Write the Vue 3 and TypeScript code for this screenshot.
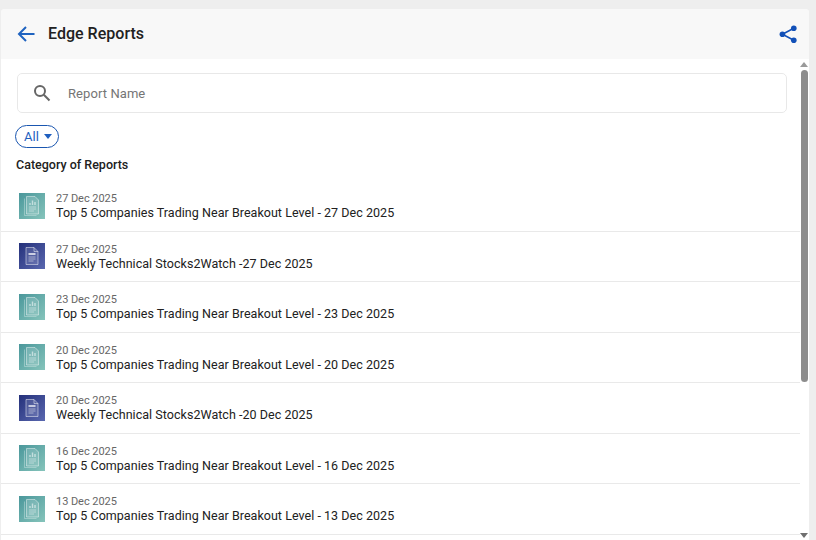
<script setup lang="ts">
interface Report { date: string; title: string; kind: 'teal' | 'navy' }
const top5 = 'Top 5 Companies Trading Near Breakout Level - '
const reports: Report[] = [
  { date: '27 Dec 2025', title: top5 + '27 Dec 2025', kind: 'teal' },
  { date: '27 Dec 2025', title: 'Weekly Technical Stocks2Watch -27 Dec 2025', kind: 'navy' },
  { date: '23 Dec 2025', title: top5 + '23 Dec 2025', kind: 'teal' },
  { date: '20 Dec 2025', title: top5 + '20 Dec 2025', kind: 'teal' },
  { date: '20 Dec 2025', title: 'Weekly Technical Stocks2Watch -20 Dec 2025', kind: 'navy' },
  { date: '16 Dec 2025', title: top5 + '16 Dec 2025', kind: 'teal' },
  { date: '13 Dec 2025', title: top5 + '13 Dec 2025', kind: 'teal' },
]
</script>

<template>
  <div class="page">
    <div class="panel">
      <header class="header">
        <div class="header-left">
          <svg class="back" width="18" height="16" viewBox="0 0 18 16" fill="none" stroke="#1f63c0" stroke-width="2">
            <path d="M17.5 8H2M9 1L2 8l7 7" />
          </svg>
          <h1 class="title">Edge Reports</h1>
        </div>
        <svg class="share" width="18" height="18" viewBox="0 0 18 18" fill="#1250b8">
          <circle cx="14.8" cy="3.2" r="2.8" />
          <circle cx="3.4" cy="9.2" r="2.8" />
          <circle cx="14.8" cy="15.2" r="2.8" />
          <path d="M14.8 3.2L3.4 9.2l11.4 6" fill="none" stroke="#1250b8" stroke-width="1.6" />
        </svg>
      </header>
      <div class="body">
        <div class="content">
          <div class="search">
            <svg width="18" height="18" viewBox="0 0 18 18" fill="none" stroke="#666" stroke-width="2">
              <circle cx="7" cy="7" r="5" />
              <path d="M10.8 10.8L16.5 16.5" />
            </svg>
            <span class="placeholder">Report Name</span>
          </div>
          <button class="filter">All<span class="caret"></span></button>
          <h2 class="category">Category of Reports</h2>
          <ul class="list">
            <li v-for="r in reports" :key="r.title" class="row">
              <div class="thumb" :class="r.kind">
                <svg v-if="r.kind === 'teal'" width="20" height="22" viewBox="0 0 20 22" fill="none" stroke="#ffffff" stroke-opacity="0.55" stroke-width="0.8">
                  <path d="M2.5 3.5v17h12" stroke-opacity="0.4" />
                  <path d="M4.5 1.5h8.5l3.5 3.5v14H4.5z" fill="#ffffff" fill-opacity="0.16" />
                  <path d="M7 12h7M7 14h7M7 16h5" />
                  <path d="M8 10V8M10.5 10V5.5M13 10V7" stroke-width="1.4" />
                </svg>
                <svg v-else width="20" height="22" viewBox="0 0 20 22" fill="none" stroke="#ffffff" stroke-opacity="0.6" stroke-width="0.8">
                  <path d="M4 2.5h8l4 4v13H4z" fill="#ffffff" fill-opacity="0.12" />
                  <path d="M12 2.5v4h4" />
                  <path d="M6.5 9h7" stroke-opacity="0.95" stroke-width="1.4" />
                  <path d="M6.5 12h7M6.5 14h7M6.5 16h5" />
                </svg>
              </div>
              <div class="text">
                <div class="date">{{ r.date }}</div>
                <div class="name">{{ r.title }}</div>
              </div>
            </li>
          </ul>
        </div>
        <div class="scrollbar">
          <span class="arrow up"></span>
          <span class="track"><span class="thumb-bar"></span></span>
          <span class="arrow down"></span>
        </div>
      </div>
    </div>
  </div>
</template>

<style>
html, body { margin: 0; overflow: hidden; }
</style>

<style scoped>
.page {
  width: 816px;
  height: 540px;
  box-sizing: border-box;
  padding: 9px 7px 0 1px;
  background: #eeeeee;
  font-family: Roboto, "Liberation Sans", sans-serif;
  overflow: hidden;
}
.panel {
  height: 531px;
  display: flex;
  flex-direction: column;
  background: #ffffff;
  border-radius: 4px 4px 0 0;
  overflow: hidden;
}
.header {
  height: 50px;
  flex: none;
  display: flex;
  align-items: center;
  justify-content: space-between;
  padding: 0 12px 0 16px;
  background: #f8f8f8;
}
.header-left { display: flex; align-items: center; gap: 13px; }
.back { display: block; }
.title {
  margin: 0;
  font-size: 16px;
  font-weight: 500;
  line-height: 20px;
  color: #212121;
  letter-spacing: 0.02px;
}
.body { flex: 1; display: flex; min-height: 0; }
.content { flex: 1; min-width: 0; overflow: hidden; }
.search {
  margin: 14px 13px 0 16px;
  height: 38px;
  border: 1px solid #e8e8e8;
  border-radius: 5px;
  display: flex;
  align-items: center;
  padding-left: 15px;
  gap: 17px;
}
.placeholder { font-size: 13px; color: #757575; letter-spacing: 0.08px; }
.filter {
  display: flex;
  align-items: center;
  gap: 5px;
  margin: 12px 0 0 14px;
  height: 23px;
  width: 44px;
  box-sizing: border-box;
  padding: 0 0 0 8px;
  border: 1px solid #1a56b0;
  border-radius: 12px;
  background: #ffffff;
  color: #1f5fbf;
  font: 400 13px Roboto, "Liberation Sans", sans-serif;
}
.caret {
  width: 0;
  height: 0;
  border-left: 4.5px solid transparent;
  border-right: 4.5px solid transparent;
  border-top: 5px solid #1f5fbf;
}
.category {
  margin: 10px 0 0 15px;
  font-size: 12.5px;
  line-height: 14px;
  font-weight: 500;
  color: #212121;
}
.list { list-style: none; margin: 9.1px 0 0; padding: 0; }
.row {
  height: 49.5px;
  box-sizing: content-box;
  display: flex;
  align-items: center;
  padding-left: 18px;
  gap: 11px;
  border-bottom: 1px solid #e9e9e9;
}
.thumb {
  width: 26px;
  height: 26px;
  flex: none;
  display: flex;
  align-items: center;
  justify-content: center;
}
.thumb.teal { background: linear-gradient(135deg, #4a979b, #86c4bb); }
.thumb.navy { background: linear-gradient(135deg, #24307a, #5a68b0); }
.text { display: flex; flex-direction: column; padding-top: 1.5px; }
.date { font-size: 11px; line-height: 13px; color: #666666; letter-spacing: -0.05px; }
.name { font-size: 12.5px; line-height: 16px; color: #212121; letter-spacing: 0.04px; }
.scrollbar {
  width: 8px;
  flex: none;
  display: flex;
  flex-direction: column;
  align-items: center;
  margin-right: 1px;
}
.arrow { width: 0; height: 0; border-left: 4px solid transparent; border-right: 4px solid transparent; flex: none; }
.arrow.up { border-bottom: 5px solid #9a9a9a; margin-top: 3px; }
.arrow.down { border-top: 5px solid #6f6f6f; margin-bottom: 2px; }
.track { flex: 1; width: 7px; padding-top: 3px; }
.thumb-bar { display: block; width: 7px; height: 312px; border-radius: 4px; background: #8c8c8c; }
</style>
